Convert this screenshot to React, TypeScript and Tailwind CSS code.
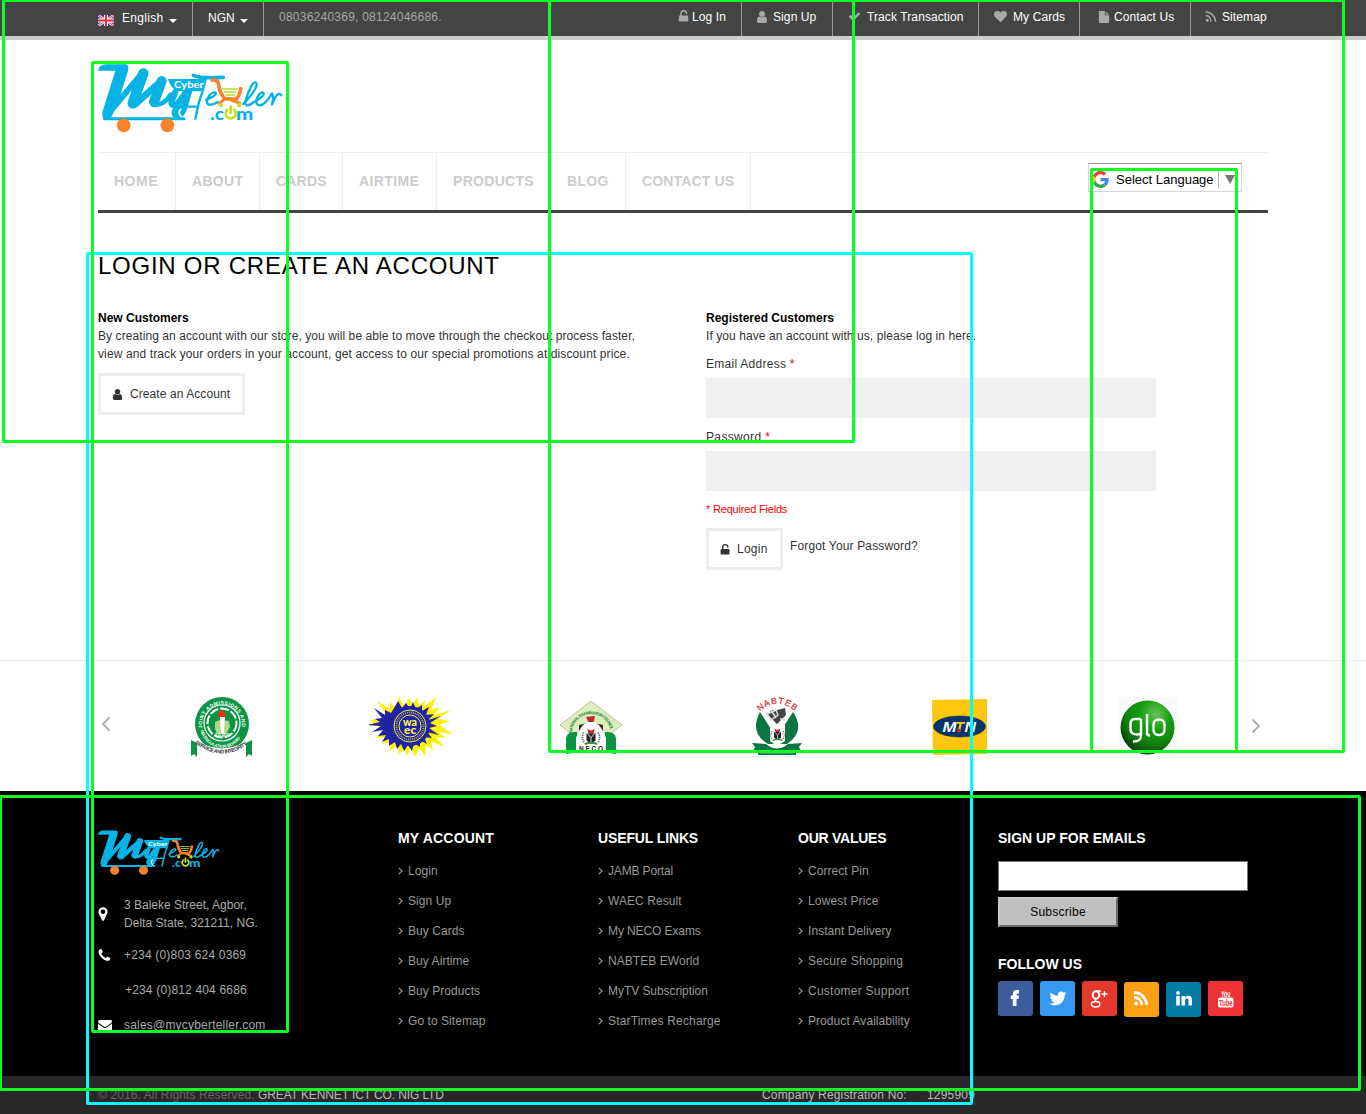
import React from "react";

const P = {
  user: "M1536 1399q0 109-62.500 187t-150.500 78h-854q-88 0-150.500-78t-62.500-187q0-85 8.500-160.500t31.500-152 58.500-131 94-89 134.500-34.500q131 128 313 128t313-128q76 0 134.500 34.500t94 89 58.500 131 31.500 152 8.500 160.500zm-256-887q0 159-112.500 271.500t-271.500 112.500-271.500-112.500-112.500-271.500 112.500-271.500 271.500-112.500 271.500 112.500 112.500 271.500z",
  check: "M1671 566q0 40-28 68l-724 724-136 136q-28 28-68 28t-68-28l-136-136-362-362q-28-28-28-68t28-68l136-136q28-28 68-28t68 28l294 295 656-657q28-28 68-28t68 28l136 136q28 28 28 68z",
  heart: "M896 1664q-26 0-44-18l-624-602q-10-8-27.500-26t-55.500-65.500-68-97.500-53.500-121-23.500-138q0-220 127-344t351-124q62 0 126.500 21.500t120 58 95.500 68.500 76 68q36-36 76-68t95.500-68.500 120-58 126.500-21.500q224 0 351 124t127 344q0 221-229 450l-623 600q-18 18-44 18z",
  phone: "M1600 1240q0 27-10 70.500t-21 68.500q-21 50-122 106-94 51-186 51-27 0-53-3.500t-57.500-12.500-47-14.500-55.500-20.500-49-18q-98-35-175-83-127-79-264-216t-216-264q-48-77-83-175-3-9-18-49t-20.500-55.500-14.500-47-12.500-57.500-3.500-53q0-92 51-186 56-101 106-122 25-11 68.500-21t70.500-10q14 0 21 3 18 6 53 76 11 19 30 54t35 63.500 31 53.500q3 4 17.500 25t21.500 35.500 7 28.500q0 20-28.500 50t-62 55-62 53-28.500 46q0 9 5 22.500t8.500 20.500 14 24 11.500 19q76 137 174 235t235 174q2 1 19 11.500t24 14 20.500 8.500 22.500 5q18 0 46-28.500t53-62 55-62 50-28.500q14 0 28.500 7t35.500 21.500 25 17.500q25 15 53.500 31t63.500 35 54 30q70 35 76 53 3 7 3 21z",
  marker: "M1152 640q0-106-75-181t-181-75-181 75-75 181 75 181 181 75 181-75 75-181zm256 0q0 109-33 179l-364 774q-16 33-47.500 52t-67.500 19-67.500-19-46.500-52l-365-774q-33-70-33-179 0-212 150-362t362-150 362 150 150 362z",
  mail: "M1792 710v794q0 66-47 113t-113 47h-1472q-66 0-113-47t-47-113v-794q44 49 101 87 362 246 497 345 57 42 92.500 65.500t94.500 48 110 24.500h2q51 0 110-24.500t94.500-48 92.500-65.500q170-123 498-345 57-39 100-87zm0-294q0 79-49 151t-122 123q-376 261-468 325-10 7-42.500 31t-54 38.500-52 32.500-57.500 27-50 9h-2q-23 0-50-9t-57.500-27-52-32.500-54-38.500-42.500-31q-91-64-262-182.500t-205-142.500q-62-42-117-115.500t-55-136.500q0-78 41.500-130t118.500-52h1472q65 0 112.500 47t47.500 113z",
  unlock: "M320 832h96V576a448 448 0 0 1 896 0q0 64-64 64h-64q-64 0-64-64a256 256 0 0 0-512 0v256h736q96 0 96 96v576q0 96-96 96H320q-96 0-96-96V928q0-96 96-96z",
  file: "M1152 512V40q22 14 36 28l408 408q14 14 28 36h-472zm-128 32q0 40 28 68t68 28h544v1056q0 40-28 68t-68 28H224q-40 0-68-28t-28-68V96q0-40 28-68t68-28h800v544z",
  rss: "M576 1344a192 192 0 1 1-384 0 192 192 0 0 1 384 0zM192 700v180a528 528 0 0 1 528 656h190A760 760 0 0 0 192 700zM192 256v190c600 0 1090 490 1090 1090h190C1472 830 900 256 192 256z",
};

function Ic({ d, s = 12, className = "" }: { d: string; s?: number; className?: string }) {
  return (
    <svg viewBox="0 0 1792 1792" width={s} height={s} className={"shrink-0 " + className} fill="currentColor">
      <path d={d} />
    </svg>
  );
}

function Logo({ className }: { className: string }) {
  const b = "#06b3e4";
  return (
    <svg viewBox="21 20 558 216" preserveAspectRatio="none" className={className} fill="none" stroke={b} strokeLinecap="round" strokeLinejoin="round">
      <path d="M24 46 Q28 28 48 27 L108 27 Q118 30 114 46 L90 122 L66 182 Q56 196 44 192 Q34 186 38 168 L76 46 Z" fill={b} stroke="none" />
      <path d="M64 164 L158 52" strokeWidth="18" />
      <path d="M160 54 L128 144" strokeWidth="31" />
      <path d="M134 148 L214 76" strokeWidth="20" />
      <path d="M215 77 L192 140" strokeWidth="30" />
      <path d="M190 148 Q222 152 242 118" strokeWidth="14" />
      <path d="M44 190 L282 190" strokeWidth="9" />
      <path d="M234 71 L345 71 L334 108 L262 108 Q240 96 234 71Z" fill={b} stroke="none" />
      <path d="M256 110 L244 142 Q246 154 262 146 L284 116" strokeWidth="18" />
      <path d="M296 108 L280 162 Q264 192 256 176 Q252 166 268 158" strokeWidth="21" />
      <path d="M272 162 q-10 10 2 22" stroke="#fff" strokeWidth="5" />
      <path d="M310 60 Q330 70 400 66" strokeWidth="11" />
      <path d="M347 72 Q340 105 327 140 L316 190" strokeWidth="7" />
      <path d="M290 154 L322 154" strokeWidth="7" />
      <path d="M348 134 Q378 122 378 114 Q372 106 358 120 Q344 142 356 148 Q368 150 384 140" strokeWidth="7" />
      <path d="M366 74 Q384 72 386 88 Q388 112 404 130 L438 132 Q450 120 452 100" stroke="#fb822b" strokeWidth="11" />
      <path d="M402 133 L388 144 M424 134 L450 144" stroke="#fb822b" strokeWidth="9" />
      <path d="M396 101 H443 M402 110 H438 M408 119 H434" stroke="#b9d92f" strokeWidth="4" />
      <circle cx="392" cy="149" r="7" fill="#c7db2b" stroke="none" />
      <circle cx="448" cy="149" r="7" fill="#c7db2b" stroke="none" />
      <path d="M460 146 Q500 104 500 86 Q494 74 484 92 Q458 146 470 150 Q480 150 492 140 Q526 122 520 112 Q510 108 500 130 Q496 150 510 150 Q526 148 546 114 Q552 124 546 148 Q556 122 562 118 Q570 112 574 120" strokeWidth="7" />
      <circle cx="101" cy="210" r="20.500" fill="#fb822b" stroke="none" />
      <circle cx="232" cy="210" r="20.500" fill="#fb822b" stroke="none" />
      <text x="252" y="97" textLength="89" lengthAdjust="spacingAndGlyphs" fontFamily="Lato" fontWeight="700" fontSize="29" fill="#fff" stroke="none">Cyber</text>
      <g fontFamily="Lato" fontWeight="900" fontSize="50" stroke="none">
        <text x="361" y="193" textLength="41" lengthAdjust="spacingAndGlyphs" fill={b}>.c</text>
        <text x="438" y="193" textLength="52" lengthAdjust="spacingAndGlyphs" fill={b}>m</text>
      </g>
      <path d="M412 163 A15 15 0 1 0 432 163 M422 154 V172" stroke="#c7db2b" strokeWidth="8" />
    </svg>
  );
}

function Flag() {
  return (
    <svg viewBox="0 0 16 11" className="mt-[3px] h-[11px] w-4">
      <rect width="16" height="11" fill="#2d3f91" />
      <path d="M0 0L16 11M16 0L0 11" stroke="#f6e3e6" strokeWidth="2.600" />
      <path d="M0 0L16 11M16 0L0 11" stroke="#d9374b" strokeWidth="1" />
      <path d="M8 0V11M0 5.500H16" stroke="#fff" strokeWidth="4" />
      <path d="M8 0V11M0 5.500H16" stroke="#dc2f3c" strokeWidth="2" />
    </svg>
  );
}

const Caret = () => (
  <svg viewBox="0 0 8 4" className="mt-[5px] h-1 w-2" fill="#fff"><path d="M0 0H8L4 4Z" /></svg>
);

function Jamb() {
  return (
    <svg viewBox="0 0 62 60" className="h-[60px] w-[62px]">
      <circle cx="31" cy="27" r="27" fill="#0b9444" />
      <circle cx="31" cy="26" r="18" fill="none" stroke="#fff" strokeWidth="1.200" />
      <circle cx="31" cy="26" r="14.500" fill="none" stroke="#fff" strokeWidth="2" strokeDasharray="9 2" />
      <path d="M24 25l5-2 9 1 1 6-4 7H26l-2-5Z" fill="#b5d98a" />
      <path d="M29 20h5l-1 16h-3z" fill="#fff" /><path d="M27 20q0-5 4-7 4 3 4 7z" fill="#f42b12" />
      <text x="23.500" y="40" fontSize="4.500" fontWeight="700" fill="#fff" textLength="15">JAMB</text>
      <path id="ja" d="M11.300 31A20 20 0 1 1 50.700 31" fill="none" />
      <path id="jb" d="M9.500 33.500A22 22 0 0 0 52.500 33.500" fill="none" />
      <text fontSize="5" fontWeight="700" fill="#fff"><textPath href="#ja" textLength="68">JOINT ADMISSIONS AND</textPath></text>
      <text fontSize="4.300" fontWeight="700" fill="#fff"><textPath href="#jb" textLength="51">MATRICULATION BOARD</textPath></text>
      <path d="M4 41Q12 50.500 31 51.500Q50 50.500 58 41L61 46Q50 60 31 60Q12 60 1 46Z" fill="#fff" />
      <path d="M0 43L6 46V60L3 57L0 59ZM61 43L55 46V60L58 57L61 59Z" fill="#0b9444" />
      <path id="jc" d="M4 46Q31 67 58 46" fill="none" />
      <text fontSize="5.300" fontWeight="700" fill="#333"><textPath href="#jc" textLength="57">SERVICE AND INTEGRITY</textPath></text>
    </svg>
  );
}

function Waec() {
  return (
    <svg viewBox="0 0 84 60" className="h-[60px] w-[84px]">
      <path d="M30 0l5 9 5-8 4 7 4-8 2 9 6-6-1 7 12-10-5 13 9-3-6 8 17-5-13 9 12 2-11 4 14 9-15-2 8 6-10-1 8 10-13-6 2 9-7-5-1 11-6-8-4 9-4-10-4 9-3-8-5 7-1-9-9 5 3-9-10 2 7-7-14 1 10-6L1 23l15-2-7-3 8-1L8 4l13 8 0-7 6 6z" fill="#fff200" />
      <path d="M29 4l4 7 4-5 4 6 3-7 3 7 6-4 0 6 7-4-3 8 8-1-6 6 13-4-11 7 7 3-8 2 10 7-12-3 5 6-8-1 3 7-7-4 0 7-6-4-2 8-4-6-4 6-3-7-4 5-2-7-6 4 0-7-7 3 4-7-8 1 5-6-11 2 9-6-14-1 13-3-5-3 7-1-8-10 11 7 0-5 6 3z" fill="#2024a0" />
      <circle cx="41" cy="29" r="20" fill="#2024a0" />
      <g fill="none" stroke="#f8ec3c"><circle cx="41" cy="29" r="16" strokeWidth="1" /><circle cx="41" cy="29" r="13.500" strokeWidth="2" strokeDasharray="1 1" opacity=".65" /><circle cx="41" cy="29" r="11" strokeWidth="1" /></g>
      <g fill="#fff45a" fontFamily="Lato" fontWeight="900" fontSize="12"><text x="34" y="28.500" textLength="14" lengthAdjust="spacingAndGlyphs">wa</text><text x="35" y="37">ec</text></g>
    </svg>
  );
}

function Crest() {
  return (
    <g>
      <path d="M-5-3h10v8L0 9l-5-4z" fill="#222" /><path d="M-4-3L0 2L4-3M0 2V8" fill="none" stroke="#eee" />
      <path d="M-4-8Q0-4 4-8L3-3H-3Z" fill="#c8232c" />
      <path d="M-8-4q-3 6 0 11M8-4q3 6 0 11" stroke="#777" strokeWidth="2" fill="none" strokeDasharray="1.500 1" />
      <path d="M-7 9Q0 6 7 9" stroke="#3c8d3c" strokeWidth="2" fill="none" />
    </g>
  );
}

function Neco() {
  return (
    <svg viewBox="0 0 64 57" className="mt-[3px] h-[57px] w-[64px]">
      <path d="M32 1L63 25L32 49L1 25Z" fill="#ddeebb" stroke="#b8a9a0" strokeWidth=".8" />
      <path id="na" d="M13 33C14 8 50 8 52 33" fill="none" />
      <text fontSize="4.200" fontWeight="700" fill="#178c42"><textPath href="#na" textLength="57">NATIONAL EXAMINATION COUNCIL</textPath></text>
      <path d="M7 38Q8 31 18 32L20 52 7 54ZM57 38Q56 31 46 32L44 52 57 54Z" fill="#0b9444" />
      <path d="M20 25l8-2v8H20zM36 23l8 2v6H36zM29 20h6l-2 8h-3z" fill="#332a28" />
      <path d="M27 17l9-1-1 5H29z" fill="#c7232b" />
      <path d="M17 55V38Q24 20 32 22Q40 20 47 38V55Z" fill="#fff" /><g transform="translate(32 36) scale(.9)"><Crest /></g>
      <text x="20" y="51" fontSize="6.500" fontWeight="700" fill="#222" textLength="24">NECO</text>
    </svg>
  );
}

function Nabteb() {
  return (
    <svg viewBox="0 0 50 60" className="h-[60px] w-[50px]">
      <path id="nt" d="M7 15Q25-2 44 15" fill="none" />
      <text fontFamily="Liberation Sans" fontSize="8.500" fill="#db3942" stroke="#db3942" strokeWidth=".3"><textPath href="#nt" startOffset="1" textLength="39">NABTEB</textPath></text>
      <path d="M8 15Q-3 36 16 47H35Q54 34 41 15L30 32H19Z" fill="#0d7443" />
      <path d="M25 13l8-2 1 7-9 9-9-9 3-5z" fill="#444" /><path d="M15 17l9-4 2 5-7 5zM19 13l5 8M28 22h5" fill="none" stroke="#ddd" strokeWidth="1.500" />
      <path d="M18 28H33V44L25 49L18 44Z" fill="#fff" /><g transform="translate(25.500 37) scale(.7)"><Crest /></g>
      <path d="M0 46L14 47Q25 56 36 47L50 46 47 50 49 54H1L3 50Z" fill="#0d7443" />
      <path d="M6 52H44V58H6Z" fill="#0d7443" /><path d="M8 56H42" stroke="#8dbb9e" strokeWidth="1" strokeDasharray="2 .6" />
    </svg>
  );
}

function Mtn() {
  return (
    <svg viewBox="0 0 55 56" className="mt-[2px] h-14 w-[55px]">
      <path d="M0 1L55 0V55L1 56Z" fill="#fdc70c" />
      <ellipse cx="27.500" cy="27.500" rx="26" ry="10.500" fill="#04366c" stroke="#222b47" strokeWidth=".6" />
      <g fontFamily="Liberation Sans" fontWeight="700" fontStyle="italic" fontSize="15.500"><text x="10.500" y="32.500" fill="#fff" textLength="14" lengthAdjust="spacingAndGlyphs">M</text><text x="23" y="32.500" fill="#fdc70c" textLength="9" lengthAdjust="spacingAndGlyphs">T</text><text x="32.500" y="32.500" fill="#fff" textLength="11.500" lengthAdjust="spacingAndGlyphs">N</text></g>
      <circle cx="27" cy="31.500" r="1.800" fill="#e3242b" />
    </svg>
  );
}

function Glo() {
  return (
    <svg viewBox="0 0 61 60" className="h-[60px] w-[61px]">
      <defs><radialGradient id="gl" cx=".65" cy=".25" r=".8"><stop offset="0" stopColor="#68c457" /><stop offset=".35" stopColor="#159f12" /><stop offset=".65" stopColor="#118711" /><stop offset="1" stopColor="#063c05" /></radialGradient></defs>
      <rect width="61" height="60" fill="#fafafa" />
      <circle cx="30.500" cy="30.500" r="27" fill="url(#gl)" />
      <g fill="none" stroke="#fff" strokeWidth="2.400"><path d="M24 22V38Q24 45 16 44.500M24 37Q13.500 39 13.500 32V27Q13.500 22 18 22H24M30 17V36Q30 38.500 33 38.500" /><rect x="36.500" y="22.500" width="11" height="15.500" rx="5" /></g>
    </svg>
  );
}

function GoogleG() {
  return (
    <svg viewBox="0 0 48 48" className="h-[17px] w-[17px]">
      <path fill="#EA4335" d="M24 9.500c3.540 0 6.710 1.220 9.210 3.600l6.850-6.850C35.900 2.380 30.470 0 24 0 14.620 0 6.510 5.380 2.560 13.220l7.980 6.190C12.430 13.720 17.740 9.500 24 9.500z" />
      <path fill="#4285F4" d="M46.980 24.550c0-1.570-.150-3.090-.380-4.550H24v9.020h12.940c-.580 2.960-2.260 5.480-4.780 7.180l7.730 6c4.510-4.180 7.090-10.360 7.090-17.650z" />
      <path fill="#FBBC05" d="M10.530 28.590c-.480-1.450-.760-2.990-.760-4.590s.270-3.140.760-4.590l-7.980-6.190C.920 16.460 0 20.120 0 24c0 3.880.920 7.540 2.560 10.780l7.970-6.190z" />
      <path fill="#34A853" d="M24 48c6.480 0 11.930-2.130 15.890-5.810l-7.730-6c-2.150 1.450-4.920 2.300-8.160 2.300-6.260 0-11.570-4.220-13.470-9.910l-7.980 6.190C6.510 42.620 14.620 48 24 48z" />
    </svg>
  );
}

const top = [
  { t: "Log In", d: P.unlock, s: 14, c: "w-[80px] pl-[15px]", g: "w-[15px] -mt-px", m: "" },
  { t: "Sign Up", d: P.user, s: 14, c: "w-[91px] pl-[14px]", g: "w-[17px]", m: "-ml-px" },
  { t: "Track Transaction", d: P.check, s: 13, c: "w-[146px] pl-[15px]", g: "w-[19px]", m: "" },
  { t: "My Cards", d: P.heart, s: 13, c: "w-[101px] pl-[15px]", g: "w-[19px]", m: "" },
  { t: "Contact Us", d: P.file, s: 12, c: "w-[111px] pl-[18px]", g: "w-[16px]", m: "mt-px" },
  { t: "Sitemap", d: P.rss, s: 15, c: "w-[77px] pl-[14px]", g: "w-[17px]", m: "-ml-px -mt-px" },
];
const nav = [
  ["HOME", "w-[78px] tracking-[0.500px]"], ["ABOUT", "w-[84px] tracking-[0.300px]"], ["CARDS", "w-[83px] tracking-[0.200px]"], ["AIRTIME", "w-[94px] tracking-[0.400px]"],
  ["PRODUCTS", "w-[114px] tracking-[0.300px]"], ["BLOG", "w-[75px] tracking-[0.300px]"], ["CONTACT US", "w-[125px] tracking-[0.150px]"],
];
const cols = [
  { h: "MY ACCOUNT", k: "tracking-[0.200px]", l: ["Login", "Sign Up", "Buy Cards", "Buy Airtime", "Buy Products", "Go to Sitemap"] },
  { h: "USEFUL LINKS", k: "tracking-[-0.130px]", l: ["JAMB Portal", "WAEC Result", "My NECO Exams", "NABTEB EWorld", "MyTV Subscription", "StarTimes Recharge"] },
  { h: "OUR VALUES", k: "tracking-[-0.250px]", l: ["Correct Pin", "Lowest Price", "Instant Delivery", "Secure Shopping", "Customer Support", "Product Availability"] },
];
const linkTracking: Record<string, string> = {
  "JAMB Portal": "tracking-[-0.150px]", "My NECO Exams": "tracking-[-0.100px]", "MyTV Subscription": "tracking-[-0.050px]",
  "StarTimes Recharge": "tracking-[0.170px]", "Secure Shopping": "tracking-[0.200px]", "Customer Support": "tracking-[0.250px]", "Lowest Price": "tracking-[0.150px]",
};
const boxes = [
  "left-[86px] top-[252px] w-[887px] h-[853px] border-[#00ffff]",
  "left-[2px] top-[-1px] w-[853px] h-[444px] border-[#0bff24]",
  "left-[548px] top-[-1px] w-[797px] h-[754px] border-[#0bff24]",
  "left-[91px] top-[61px] w-[198px] h-[972px] border-[#0bff24]",
  "left-[1090px] top-[168px] w-[148px] h-[585px] border-[#0bff24]",
  "left-[-1px] top-[795px] w-[1362px] h-[296px] border-[#0bff24]",
];

const Social = ({ c, children }: { c: string; children: React.ReactNode }) => (
  <a className={"flex h-[35px] w-[35px] items-center justify-center rounded-[3px] " + c}>
    <svg viewBox="0 0 35 35" className="h-[35px] w-[35px]" fill="#fff">{children}</svg>
  </a>
);

export default function App() {
  return (
    <div className="relative h-[1114px] w-[1366px] overflow-hidden bg-white font-['Liberation_Sans',Arial,sans-serif] text-[12px] leading-[18px] text-[#333]">
      <header className="h-10 border-b-4 border-[#ccc] bg-[#444] text-white">
        <div className="mx-auto flex h-9 w-[1170px]">
          <div className="flex w-[95px] border-r border-[#999] pt-[9px]">
            <span className="mt-[3px] w-6"><Flag /></span><span className="w-[47px] tracking-[0.300px]">English</span><span className="pt-[5px]"><Caret /></span>
          </div>
          <div className="flex w-[71px] border-r border-[#999] pl-[15px] pt-[9px]">
            <span className="w-8">NGN</span><span className="pt-[5px]"><Caret /></span>
          </div>
          <span className="pl-[15px] pt-2 tracking-[0.240px] text-[#aaa]">08036240369, 08124046686.</span>
          <nav className="ml-auto flex">
            {top.map((x, i) => (
              <a key={x.t} className={"flex whitespace-nowrap pt-2 tracking-[0.100px] " + x.c + (i < 5 ? " border-r border-[#999]" : "")}>
                <span className={"shrink-0 pt-[2px] text-[#aaa] " + x.g}><Ic d={x.d} s={x.s} className={x.m} /></span>{x.t}
              </a>
            ))}
          </nav>
        </div>
      </header>

      <div className="mx-auto w-[1170px]">
        <div className="h-28 pt-[22px]"><Logo className="-ml-px h-[72px] w-[186px]" /></div>
        <div className="flex h-[61px] border-b-[3px] border-t border-b-[#444] border-t-[#eee]">
          {nav.map(([t, c]) => (
            <a key={t} className={"whitespace-nowrap border-r border-[#eee] pl-4 pt-[19px] text-[14px] font-bold text-[#ccc] " + c}>{t}</a>
          ))}
          <div className="ml-auto mr-[26px] mt-[10px] flex h-[29px] w-[154px] items-center border border-[#d5d5d5] border-t-[#9b9b9b] bg-white pl-[3px] pt-[4px] text-[13px] text-black">
            <GoogleG /><span className="ml-[7px] w-[102px] whitespace-nowrap">Select Language</span>
            <span className="-mt-px h-[18px] w-[7px] border-l border-[#bbb]" />
            <svg viewBox="0 0 10 9" className="h-[9px] w-[10px]" fill="#767676"><path d="M0 0H10L5 9Z" /></svg>
          </div>
        </div>

        <main className="h-[447px] pt-[41px]">
          <h1 className="h-[55px] text-[24px] leading-[24px] tracking-[0.750px] text-black">LOGIN OR CREATE AN ACCOUNT</h1>
          <div className="flex">
            <section className="w-[608px]">
              <h2 className="font-bold text-black">New Customers</h2>
              <p className="whitespace-nowrap tracking-[0.080px]">By creating an account with our store, you will be able to move through the checkout process faster,</p>
              <p className="whitespace-nowrap tracking-[0.110px]">view and track your orders in your account, get access to our special promotions at discount price.</p>
              <button className="mt-[10px] flex h-[42px] w-[147px] items-center whitespace-nowrap border-[3px] border-[#eee] pl-[10px] tracking-[0.080px]">
                <Ic d={P.user} s={13} className="mr-[6px]" />Create an Account
              </button>
            </section>
            <section>
              <h2 className="font-bold text-black">Registered Customers</h2>
              <p className="tracking-[0.080px]">If you have an account with us, please log in here.</p>
              <label className="mt-[10px] block tracking-[0.270px]">Email Address <span className="text-red-600">*</span></label>
              <input className="mt-[5px] block h-10 w-[450px] bg-[#efefef]" />
              <label className="mt-[10px] block tracking-[0.350px]">Password <span className="text-red-600">*</span></label>
              <input className="mt-[5px] block h-10 w-[450px] bg-[#efefef]" />
              <p className="mt-[9px] text-[11px] tracking-[-0.190px] text-[#f00]">* Required Fields</p>
              <div className="mt-[10px] flex">
                <button className="flex h-[42px] w-[77px] items-center border-[3px] border-[#eee] pl-[10px] tracking-[0.250px]">
                  <Ic d={P.unlock} s={13} className="mr-[5px]" />Login
                </button>
                <a className="ml-[7px] mt-[9px] tracking-[0.150px]">Forgot Your Password?</a>
              </div>
            </section>
          </div>
        </main>
      </div>

      <section className="h-[131px] border-t border-[#eee]">
        <div className="mx-auto flex w-[1170px] pt-9">
          <svg viewBox="0 0 10 16" className="ml-[3px] mt-[19px] h-4 w-[10px]" fill="none" stroke="#aaa" strokeWidth="1.800"><path d="M8.500 1.500L2 8L8.500 14.500" /></svg>
          <div className="ml-[80px] w-[178px]"><Jamb /></div>
          <div className="w-[190px]"><Waec /></div>
          <div className="w-[193px]"><Neco /></div>
          <div className="w-[180px]"><Nabteb /></div>
          <div className="w-[185px]"><Mtn /></div>
          <div className="w-[134px]"><Glo /></div>
          <svg viewBox="0 0 10 16" className="mt-[21px] h-4 w-[10px]" fill="none" stroke="#aaa" strokeWidth="1.800"><path d="M1.500 1.500L8 8L1.500 14.500" /></svg>
        </div>
      </section>

      <footer className="h-[285px] bg-black text-[#aaa]">
        <div className="mx-auto flex w-[1170px] pt-[38px]">
          <div className="w-[300px]">
            <Logo className="-ml-px h-[47px] w-[123px]" />
            <div className="mt-[20px] flex items-center"><Ic d={P.marker} s={16} className="-ml-[3.500px] mr-[13.500px] text-white" /><p>3 Baleke Street, Agbor,<br /><span className="tracking-[0.030px]">Delta State, 321211, NG.</span></p></div>
            <div className="mt-[14px] flex items-center"><Ic d={P.phone} s={15} className="-ml-[1.500px] mr-[12.500px] text-white" /><p className="tracking-[0.190px]">+234 (0)803 624 0369</p></div>
            <p className="mt-[17px] pl-[27px] tracking-[0.170px]">+234 (0)812 404 6686</p>
            <div className="mt-[17px] flex items-center"><Ic d={P.mail} s={14} className="mr-[12px] text-white" /><p className="tracking-[0.200px]">sales@mycyberteller.com</p></div>
          </div>
          {cols.map((c) => (
            <div key={c.h} className="w-[200px]">
              <h3 className={"mb-[9px] text-[14px] font-bold text-white " + c.k}>{c.h}</h3>
              {c.l.map((t) => (
                <a key={t} className={"flex h-[30px] items-center text-[#999] " + (linkTracking[t] || "tracking-[0.060px]")}>
                  <svg viewBox="0 0 5 8" className="mr-[5px] h-2 w-[5px]" fill="none" stroke="#999" strokeWidth="1.200"><path d="M.800 .800L4 4L.800 7.200" /></svg>{t}
                </a>
              ))}
            </div>
          ))}
          <div>
            <h3 className="text-[14px] font-bold text-white">SIGN UP FOR EMAILS</h3>
            <input className="mt-[14px] block h-[30px] w-[250px] border border-[#767676] bg-white" />
            <button className="mt-[6px] block h-[30px] w-[120px] border-2 border-b-[#696969] border-l-[#c8c8c8] border-r-[#696969] border-t-[#c8c8c8] bg-[#c0c0c0] leading-[26px] tracking-[0.250px] text-black">Subscribe</button>
            <h3 className="mt-[28px] text-[14px] font-bold text-white">FOLLOW US</h3>
            <div className="mt-[8px] flex gap-[7px]">
              <Social c="bg-[#3d5c9b]"><path d="M14.800 25V18H12.800V14.500H14.800V13.200Q14.800 9 18.700 9H21V12.500H19.700Q18.500 12.500 18.500 14V14.500H21L20.500 18H18.500V25Z" /></Social>
              <Social c="bg-[#3599f0]"><path transform="translate(9.500 9) scale(.033)" d="M459.370 151.716c.325 4.548.325 9.097.325 13.645 0 138.720-105.583 298.558-298.558 298.558-59.452 0-114.680-17.219-161.137-47.106 8.447.974 16.568 1.299 25.340 1.299 49.055 0 94.213-16.568 130.274-44.832-46.132-.975-84.792-31.188-98.112-72.772 6.498.974 12.995 1.624 19.818 1.624 9.421 0 18.843-1.300 27.614-3.573-48.081-9.747-84.143-51.980-84.143-102.985v-1.299c13.969 7.797 30.214 12.670 47.431 13.319-28.264-18.843-46.781-51.005-46.781-87.391 0-19.492 5.197-37.360 14.294-52.954 51.655 63.675 129.300 105.258 216.365 109.807-1.624-7.797-2.599-15.918-2.599-24.040 0-57.828 46.782-104.934 104.934-104.934 30.213 0 57.502 12.670 76.670 33.137 23.715-4.548 46.456-13.320 66.599-25.340-7.798 24.366-24.366 44.833-46.132 57.827 21.117-2.273 41.584-8.122 60.426-16.243-14.292 20.791-32.161 39.308-52.628 54.253z" /></Social>
              <Social c="bg-[#e3382b]"><g fill="none" stroke="#fff"><ellipse cx="14" cy="14" rx="3.300" ry="3.800" strokeWidth="2" /><path d="M14 10H19M14 18Q11.500 19.300 14.500 20.500" strokeWidth="1.300" /><ellipse cx="13.700" cy="23.300" rx="4.200" ry="2.700" strokeWidth="1.500" /><path d="M22.500 10V16M19.500 13H25.500" strokeWidth="1.300" /></g></Social>
              <Social c="relative top-px bg-[#fd9f15]"><g fill="none" stroke="#fff" strokeWidth="2.800"><path d="M10 15.500A7 7 0 0 1 17.500 23M10 10.500A12.500 12.500 0 0 1 22.500 23" /></g><circle cx="12" cy="21.500" r="2" /></Social>
              <Social c="relative top-px bg-[#027ba5]"><circle cx="12" cy="11" r="1.900" /><path d="M10.200 14H13.800V23.500H10.200ZM15.500 14H19V15.300Q20 13.700 22.300 13.700Q26 13.700 26 18V23.500H22.500V18.800Q22.500 16.500 20.800 16.500Q19 16.500 19 18.800V23.500H15.500Z" /></Social>
              <Social c="bg-[#ef3236]"><rect x="10" y="16.500" width="15.500" height="10" rx="2.500" /><g fontFamily="Liberation Sans" fontWeight="700"><text x="13" y="15.500" fontSize="8.500" textLength="9.500" lengthAdjust="spacingAndGlyphs">You</text><text x="11" y="25" fontSize="9" fill="#ef3236" textLength="13.500" lengthAdjust="spacingAndGlyphs">Tube</text></g></Social>
            </div>
          </div>
        </div>
      </footer>
      <div className="h-[38px] bg-[#282828] pt-[10px]">
        <div className="mx-auto flex w-[1170px] whitespace-nowrap text-[#bbb]">
          <p className="w-[160px] tracking-[0.110px] text-[#666]">© 2016. All Rights Reserved.</p>
          <p className="w-[504px] tracking-[-0.110px]">GREAT KENNET ICT CO. NIG LTD</p>
          <span className="w-[165px] tracking-[0.170px]">Company Registration No:</span><span className="tracking-[0.200px]">1295909</span>
        </div>
      </div>

      {boxes.map((b) => <div key={b} className={"pointer-events-none absolute rounded-[2px] border-[3px] " + b} />)}
    </div>
  );
}
